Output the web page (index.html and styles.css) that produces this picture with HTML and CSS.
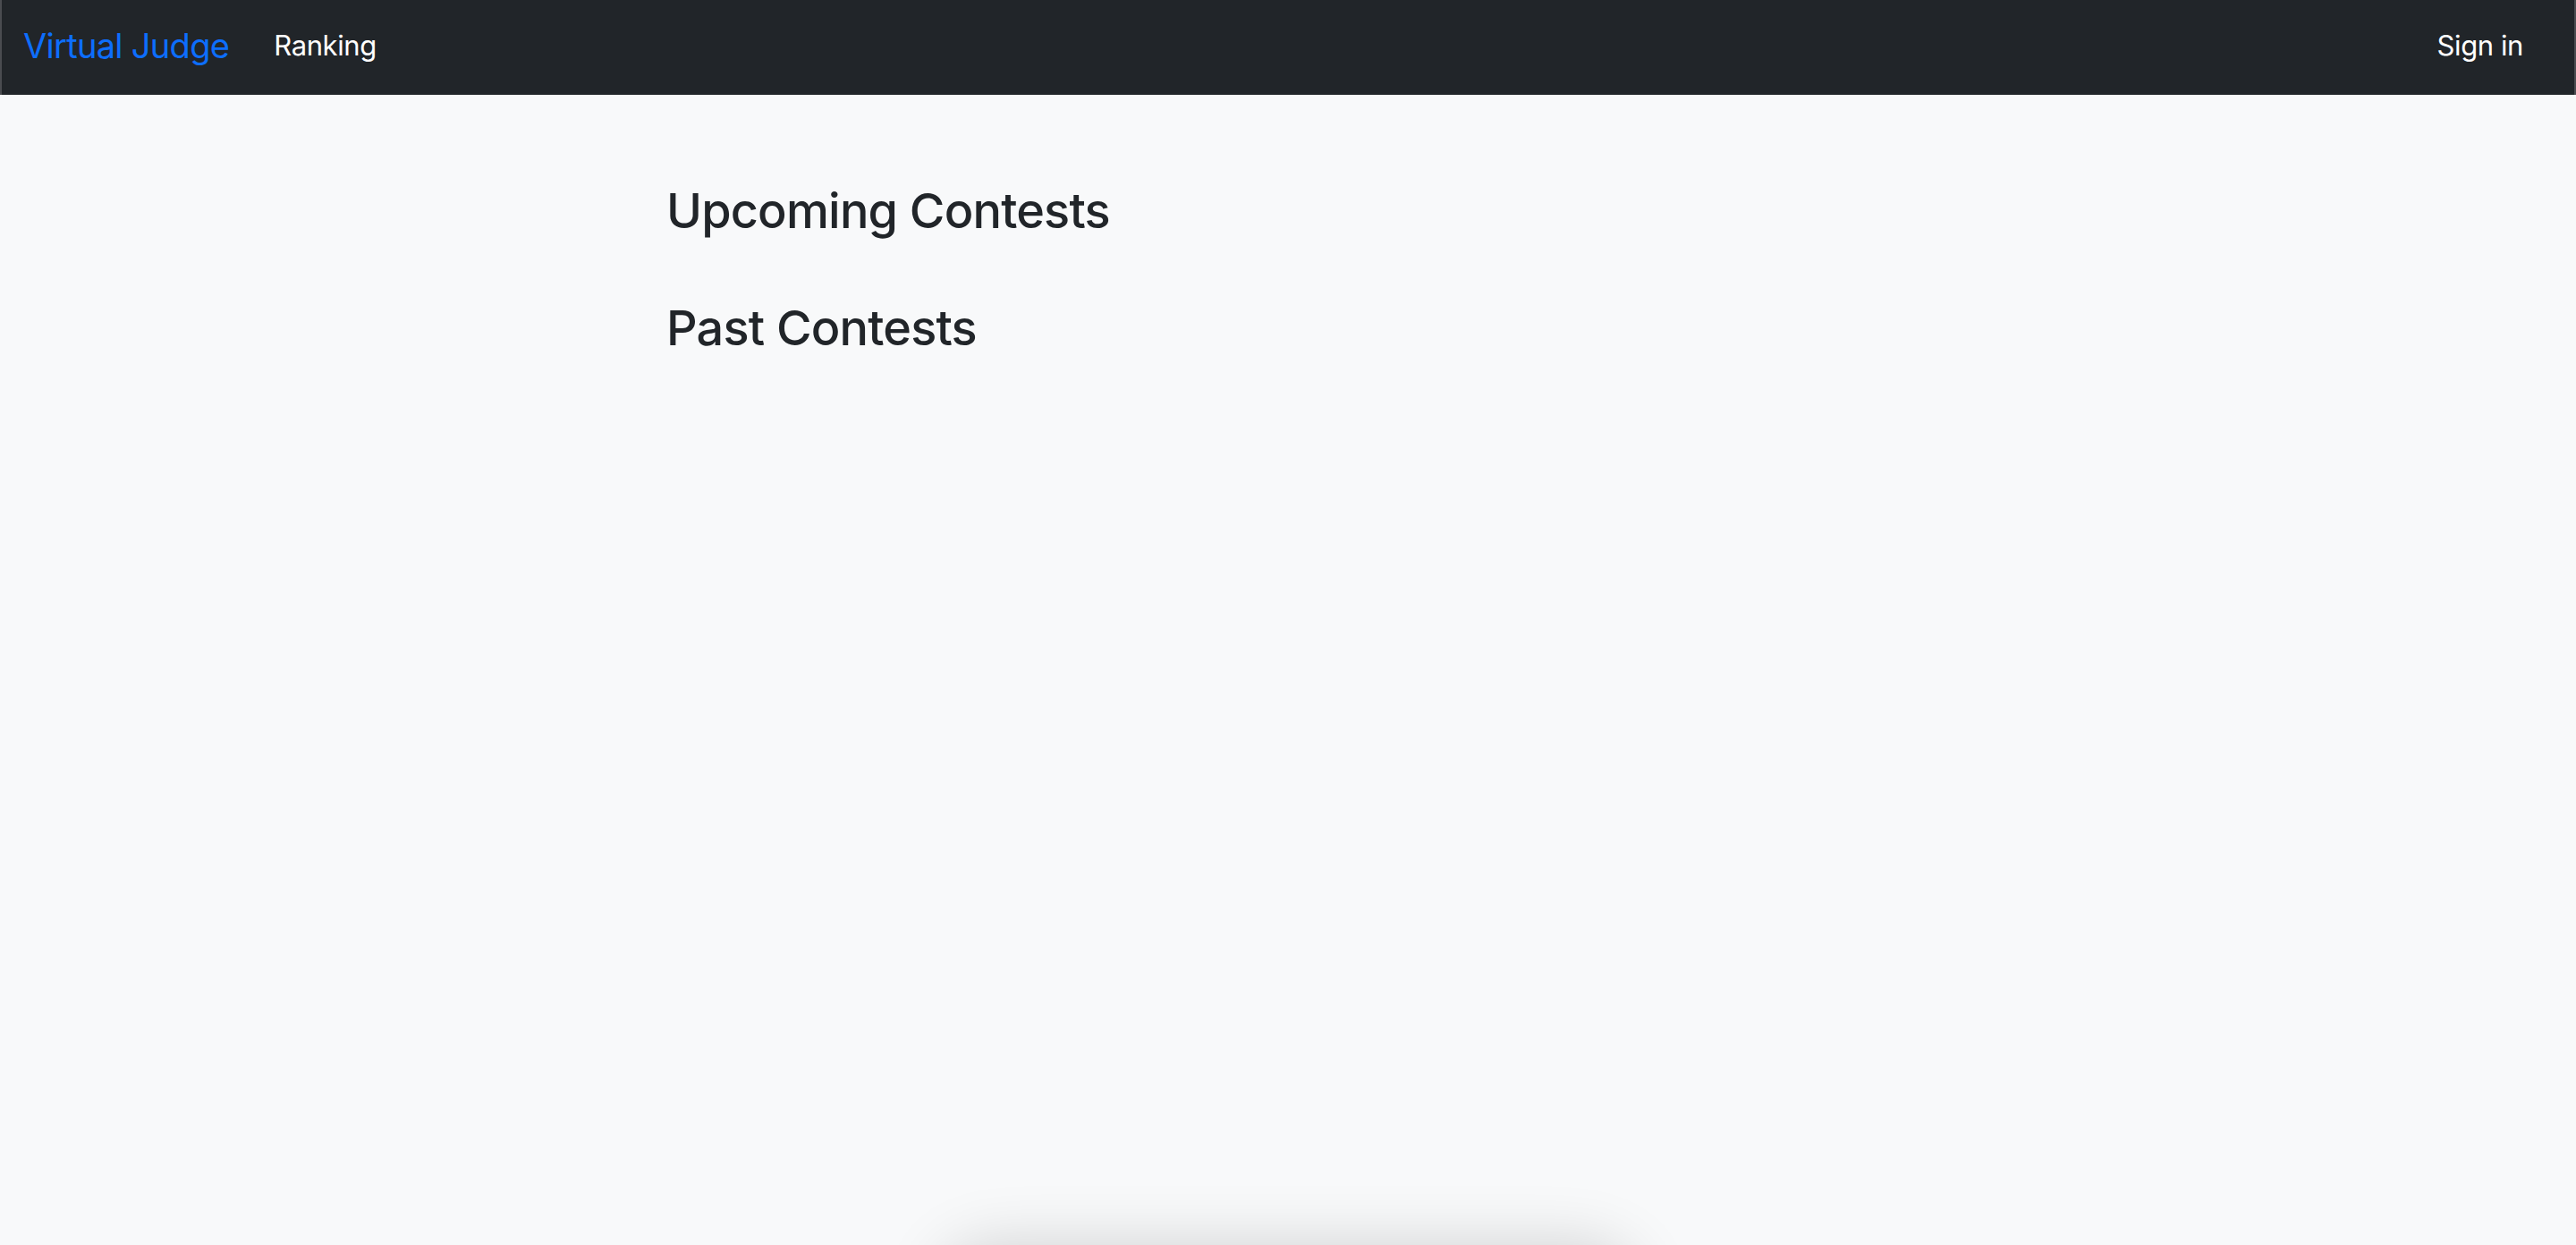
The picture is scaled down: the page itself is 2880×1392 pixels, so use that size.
FILE: index.html
```html
<!DOCTYPE html>
<html lang="en">
<head>
<meta charset="utf-8">
<title>Virtual Judge</title>
<link rel="stylesheet" href="styles.css">
</head>
<body>
<div class="app">
  <nav class="navbar">
    <a class="brand" href="#">Virtual Judge</a>
    <a class="nav-link" href="#">Ranking</a>
    <span class="spacer"></span>
    <a class="nav-link" href="#">Sign in</a>
  </nav>
  <main class="main">
    <section class="contests">
      <h3 class="section-title">Upcoming Contests</h3>
      <h3 class="section-title">Past Contests</h3>
    </section>
  </main>
  <div class="footer-card"></div>
</div>
</body>
</html>
```
FILE: styles.css
```css
* { box-sizing: border-box; }
html, body {
  margin: 0;
  padding: 0;
  background: #f8f9fa;
}
body {
  font-family: Inter, "Liberation Sans", sans-serif;
  color: #212529;
  overflow: hidden;
}
.app {
  display: flex;
  flex-direction: column;
}
.navbar {
  height: 106px;
  background: #212529;
  display: flex;
  align-items: center;
  padding: 0 57px 5px 24px;
  border-left: 2px solid #4a4c50;
  border-right: 2px solid #4a4c50;
}
.brand {
  color: #0d6efd;
  font-size: 38px;
  line-height: 58px;
  text-decoration: none;
  margin-right: 50px;
  letter-spacing: -0.7px;
}
.nav-link {
  color: #ffffff;
  font-size: 31px;
  line-height: 46px;
  text-decoration: none;
  letter-spacing: -0.4px;
}
.spacer { flex: 1; }
.main {
  height: 1286px;
  padding: 96px 0 0 745px;
}
.section-title {
  margin: 0 0 64px 0;
  font-size: 54px;
  font-weight: 500;
  line-height: 67px;
  letter-spacing: -0.8px;
}
.footer-card {
  width: 780px;
  height: 120px;
  margin: 0 auto;
  border-radius: 60px;
  background: #f8f9fa;
  box-shadow: 0 0 70px rgba(0, 0, 0, 0.16);
}
```
